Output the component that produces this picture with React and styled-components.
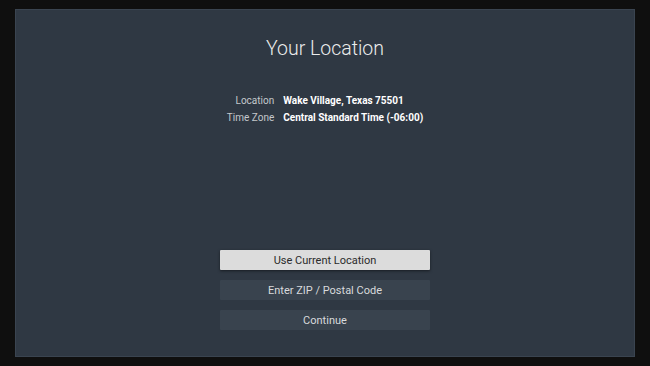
import React from "react";
import styled, { createGlobalStyle } from "styled-components";

const Global = createGlobalStyle`
  html, body {
    margin: 0;
    padding: 0;
    background: #0f0f0f;
  }
  body {
    font-family: Roboto, "Liberation Sans", sans-serif;
  }
`;

export default function App() {
  return (
    <Screen>
      <Global />
      <Panel>
        <Title>Your Location</Title>
        <Details>
          <Label>Location</Label>
          <Value>Wake Village, Texas 75501</Value>
          <Label>Time Zone</Label>
          <Value>Central Standard Time (-06:00)</Value>
        </Details>
        <Actions>
          <Button $active>Use Current Location</Button>
          <Button>Enter ZIP / Postal Code</Button>
          <Button>Continue</Button>
        </Actions>
      </Panel>
    </Screen>
  );
}

const Screen = styled.div`
  width: 650px;
  height: 366px;
  background: #0f0f0f;
  padding: 9px 15px;
  box-sizing: border-box;
`;
const Panel = styled.div`
  height: 348px;
  background: #2f3843;
  border: 1px solid #3a4450;
  box-sizing: border-box;
  display: flex;
  flex-direction: column;
  align-items: center;
`;
const Title = styled.h1`
  margin: 27px 0 0;
  font-size: 19.5px;
  font-weight: 300;
  line-height: 24px;
  color: #ececec;
`;
const Details = styled.div`
  margin-top: 34px;
  display: grid;
  grid-template-columns: auto auto;
  column-gap: 9px;
  row-gap: 5px;
  font-size: 10px;
  line-height: 12px;
`;
const Label = styled.span`
  text-align: right;
  color: #c4c8cc;
  font-weight: 400;
`;
const Value = styled.span`
  color: #ffffff;
  font-weight: 700;
`;
const Actions = styled.div`
  margin-top: 126px;
  display: flex;
  flex-direction: column;
  gap: 10px;
`;
const Button = styled.div`
  width: 210px;
  height: 20px;
  display: flex;
  align-items: center;
  justify-content: center;
  font-size: 11px;
  color: ${(p) => (p.$active ? "#2b2b2b" : "#d8dadc")};
  background: ${(p) => (p.$active ? "#dcdcdc" : "#39434e")};
  box-shadow: ${(p) => (p.$active ? "0 1px 3px rgba(0,0,0,0.5)" : "none")};
  border-radius: 1px;
`;
